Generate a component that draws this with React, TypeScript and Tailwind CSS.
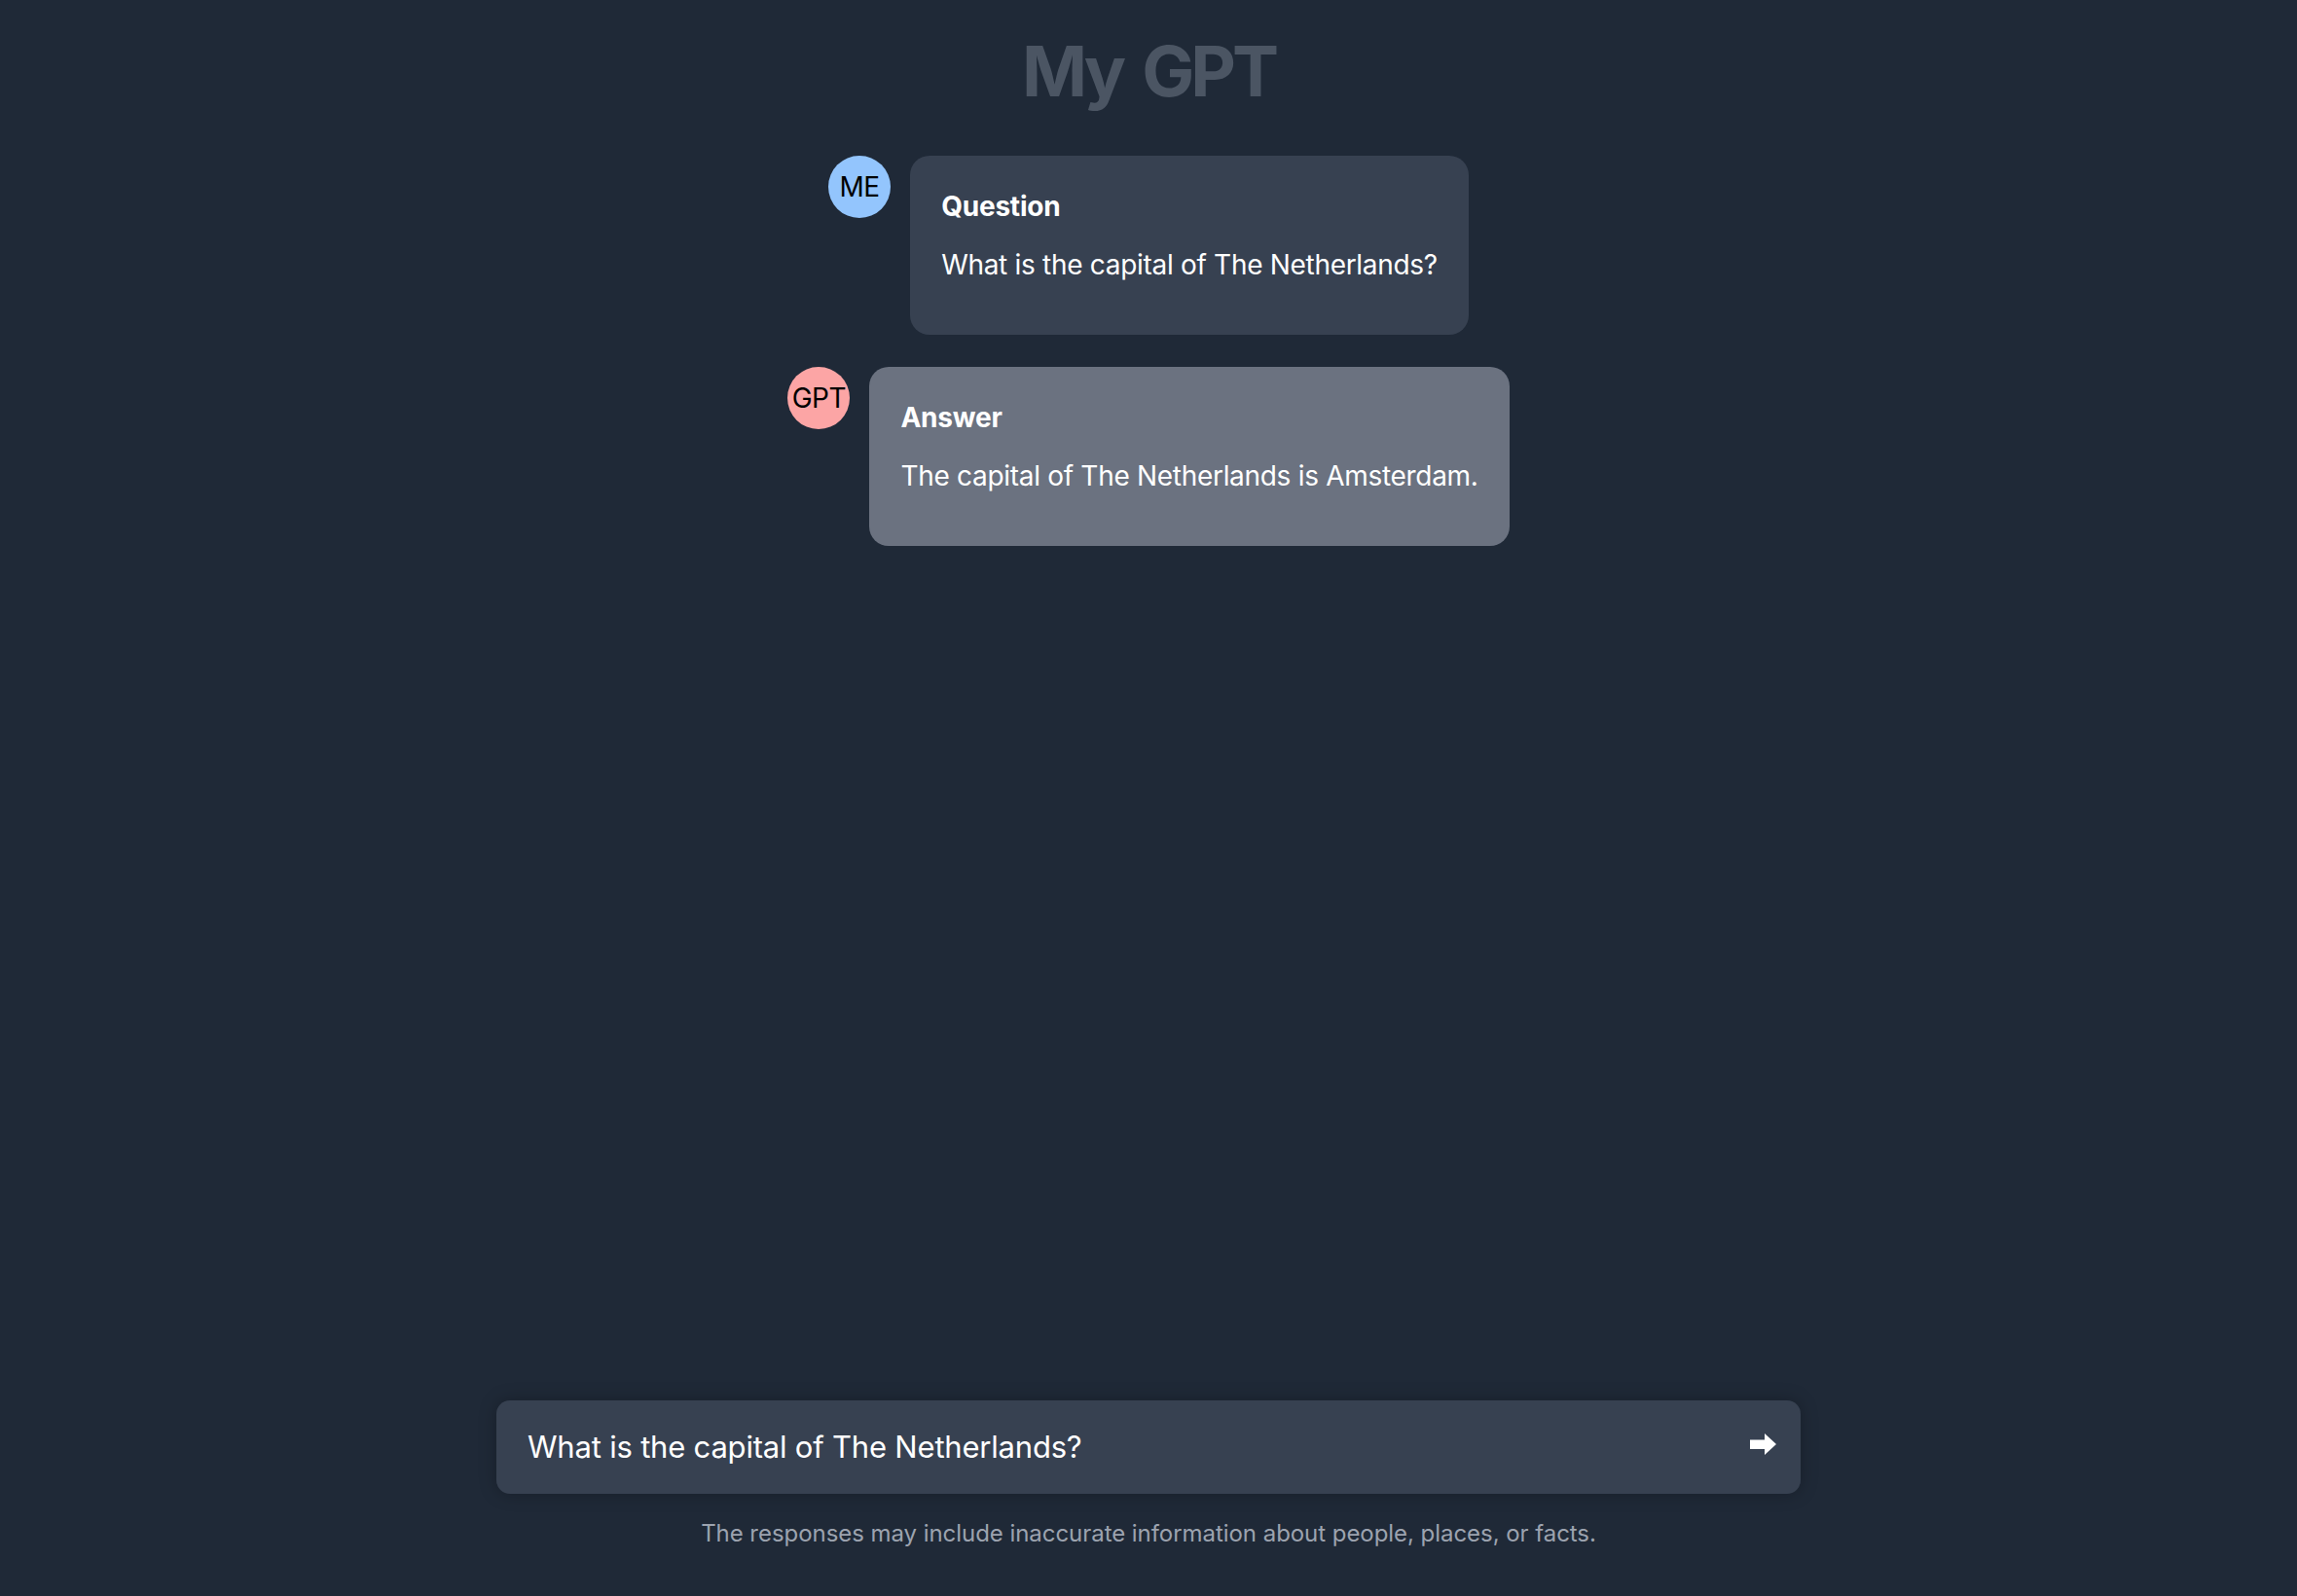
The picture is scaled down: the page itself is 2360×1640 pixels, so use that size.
import React from 'react'

type Message = {
  role: 'me' | 'gpt'
  title: string
  text: string
}

const messages: Message[] = [
  { role: 'me', title: 'Question', text: 'What is the capital of The Netherlands?' },
  { role: 'gpt', title: 'Answer', text: 'The capital of The Netherlands is Amsterdam.' },
]

function Avatar({ role }: { role: Message['role'] }) {
  return (
    <div
      className={`flex h-16 w-16 shrink-0 items-center justify-center rounded-full text-[28px] leading-[40px] tracking-[-0.5px] text-black ${
        role === 'me' ? 'bg-[#93c5fd]' : 'bg-[#fca5a5]'
      }`}
    >
      {role === 'me' ? 'ME' : 'GPT'}
    </div>
  )
}

function Bubble({ message }: { message: Message }) {
  return (
    <div className="flex items-start gap-5">
      <Avatar role={message.role} />
      <div
        className={`rounded-[20px] px-8 pt-8 pb-8 text-white ${
          message.role === 'me' ? 'bg-[#374151]' : 'bg-[#6b7280]'
        }`}
      >
        <h2 className="text-[28px] font-bold leading-[40px] tracking-[-0.2px]">{message.title}</h2>
        <p className="my-5 text-[28px] leading-[40px] tracking-[-0.3px]">{message.text}</p>
      </div>
    </div>
  )
}

function ArrowIcon() {
  return (
    <svg width="27" height="22" viewBox="0 0 27 22" fill="currentColor" aria-hidden="true">
      <polygon points="0,6.5 15,6.5 15,0 27,11 15,22 15,16 0,16" />
    </svg>
  )
}

export default function App() {
  return (
    <div className="flex h-screen flex-col items-center bg-[#1f2937] font-['Inter','Noto_Sans',sans-serif]">
      <h1 className="pt-[33px] text-[72px] font-bold leading-[80px] tracking-[-4px] text-[#4b5563] [word-spacing:7px]">
        My GPT
      </h1>

      <div className="mt-[47px] flex flex-col items-center gap-[33px]">
        {messages.map((m) => (
          <Bubble key={m.role} message={m} />
        ))}
      </div>

      <div className="flex-1" />

      <div className="flex w-[1340px] items-center justify-between rounded-[14px] bg-[#374151] py-8 pl-8 pr-[25px] shadow-[0_0_18px_rgba(0,0,0,0.25)]">
        <span className="text-[31px] leading-[32px] tracking-[-0.2px] text-white">
          What is the capital of The Netherlands?
        </span>
        <button className="-mt-[7px] text-white">
          <ArrowIcon />
        </button>
      </div>

      <p className="mt-[25px] pb-12 text-[24px] leading-[32px] tracking-[-0.05px] text-[#9ca3af]">
        The responses may include inaccurate information about people, places, or facts.
      </p>
    </div>
  )
}
